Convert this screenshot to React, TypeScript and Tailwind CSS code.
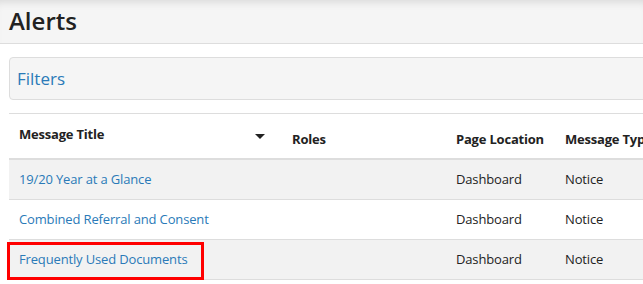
const rows = [
  { title: '19/20 Year at a Glance', location: 'Dashboard', type: 'Notice' },
  { title: 'Combined Referral and Consent', location: 'Dashboard', type: 'Notice' },
  { title: 'Frequently Used Documents', location: 'Dashboard', type: 'Notice', highlight: true },
];

export default function App() {
  return (
    <div className="w-[643px] h-[284px] overflow-hidden bg-white text-[#222] font-['Open_Sans','Noto_Sans',sans-serif]">
      <div className="h-[44px] bg-[#f5f5f5] border-b border-[#ddd] shadow-[inset_0_8px_8px_-6px_rgba(0,0,0,0.12)] pl-[9px] flex items-center">
        <h1 className="text-[24px] leading-none font-semibold text-[#222] -mt-[1px]">Alerts</h1>
      </div>

      <div className="pl-[9px] pt-[13px]">
        <div className="w-[700px] h-[43px] bg-[#f5f5f5] border border-[#ddd] rounded-[4px] flex items-center pl-[7px]">
          <span className="text-[17px] text-[#2a7ab8]">Filters</span>
        </div>

        <div className="mt-[13px] w-[760px] border-t border-[#ddd]">
          <div className="grid grid-cols-[273px_164px_109px_214px] h-[46px] border-b-2 border-[#ddd] text-[13px] font-bold tracking-[-0.2px]">
            <div className="relative pl-[10px] pt-[11px]">
              Message Title
              <span className="absolute left-[246px] top-[20px] w-0 h-0 border-l-[5px] border-r-[5px] border-t-[5px] border-l-transparent border-r-transparent border-t-[#222]" />
            </div>
            <div className="pl-[10px] pt-[16px]">Roles</div>
            <div className="pl-[10px] pt-[16px]">Page Location</div>
            <div className="pl-[10px] pt-[16px] whitespace-nowrap">Message Type</div>
          </div>

          {rows.map((r, i) => (
            <div
              key={r.title}
              className={`grid grid-cols-[273px_164px_109px_214px] h-[40px] border-b border-[#ddd] text-[13px] tracking-[-0.15px] pt-[1px] ${i % 2 === 0 ? 'bg-[#f2f2f2]' : 'bg-white'}`}
            >
              <div className="relative pl-[10px] flex items-center">
                <a className="text-[#2a7ab8]">{r.title}</a>
                {r.highlight && (
                  <span className="absolute left-[-2px] top-[1px] w-[197px] h-[38px] border-[3px] border-[#ff0000]" />
                )}
              </div>
              <div className="pl-[10px] flex items-center" />
              <div className="pl-[10px] flex items-center">{r.location}</div>
              <div className="pl-[10px] flex items-center">{r.type}</div>
            </div>
          ))}
        </div>
      </div>
    </div>
  );
}
